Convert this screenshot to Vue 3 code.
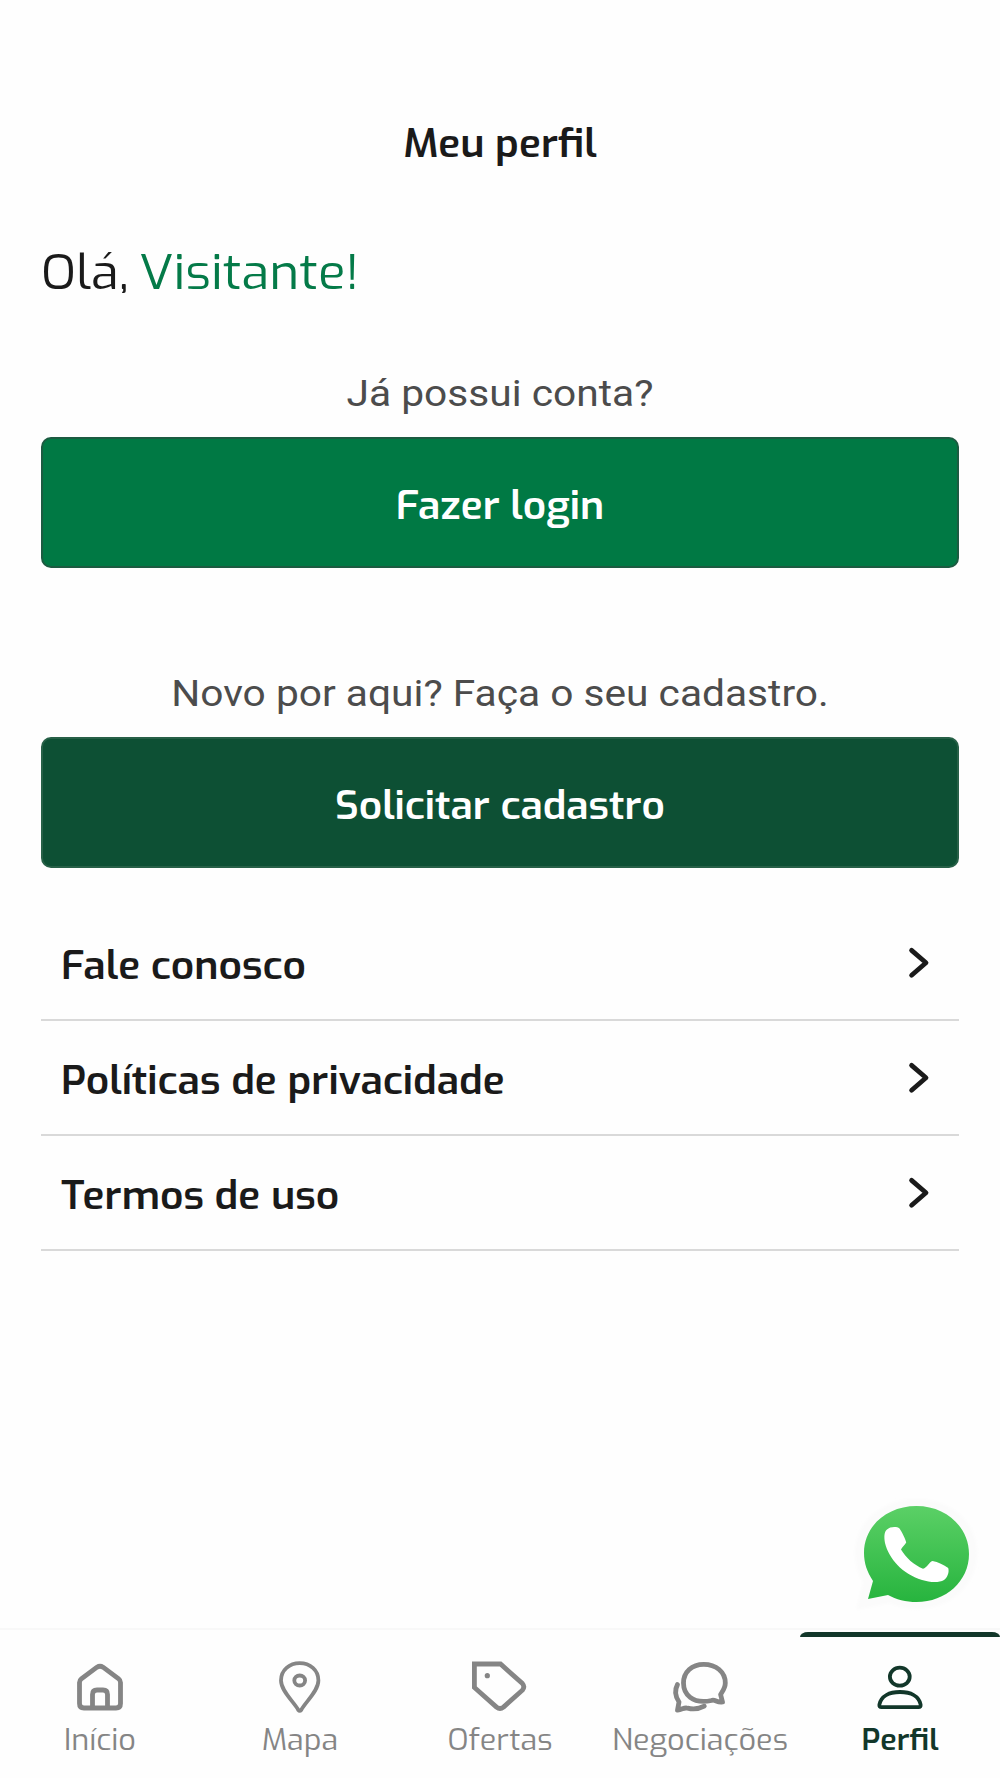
<script setup>
const links = ['Fale conosco', 'Políticas de privacidade', 'Termos de uso']
</script>

<template>
  <div class="screen">
    <header class="topbar"><h1 class="text">Meu perfil</h1></header>

    <main class="content">
      <h2 class="greeting text">Olá, <span>Visitante!</span></h2>

      <p class="hint hint-login">Já possui conta?</p>
      <button class="btn login"><span class="text">Fazer login</span></button>

      <p class="hint hint-register">Novo por aqui? Faça o seu cadastro.</p>
      <button class="btn register"><span class="text">Solicitar cadastro</span></button>

      <ul class="links">
        <li v-for="label in links" :key="label">
          <span class="text">{{ label }}</span>
          <svg class="chevron" width="24" height="34" viewBox="0 0 24 34">
            <path d="M4.6 4.4 19 16.8 4.6 29.2" />
          </svg>
        </li>
      </ul>
    </main>

    <svg class="whatsapp" width="144" height="130" viewBox="848 1490 144 130">
      <defs>
        <linearGradient id="wa" x1="0" y1="0" x2="0" y2="1">
          <stop offset="0" stop-color="#5bd066" />
          <stop offset="1" stop-color="#27b43e" />
        </linearGradient>
        <filter id="soft" x="-10%" y="-10%" width="120%" height="120%">
          <feGaussianBlur stdDeviation="1.500" />
        </filter>
      </defs>
      <path class="halo" filter="url(#soft)" d="M856 1609 863 1581C857 1571 855 1562 855 1552C855 1521 882 1498 916.500 1498C951 1498 977 1521 977 1552C977 1584 951 1608 916.500 1608C907 1608 898 1606 890 1602Z" />
      <path fill="url(#wa)" d="M868 1598 873 1580C867 1571 864 1562 864 1552C864 1525 887 1505 916.500 1505C946 1505 969 1526 969 1553C969 1580 946 1601 916.500 1601C906 1601 896 1598.500 888 1594Z" />
      <path fill="#fff" d="M887 1528.500C890 1525.500 897 1525.300 899.500 1527.500C902.500 1532 905.500 1538 906.200 1541.500C905 1544 902 1546 901 1548.500C906 1557 914 1564 923 1567.700C927 1567 929 1561 932.500 1560C938 1561 944 1564 948.200 1567C949.500 1571 947.500 1576.500 944 1579C939 1582 930 1581.500 922 1579C902 1572.500 889 1558 885 1542C884 1536 884 1531 887 1528.500Z" />
    </svg>

    <nav class="tabs">
      <a class="tab">
        <svg class="icon" width="64" height="60" viewBox="68 1655 64 60">
          <path class="w5" d="M79.500 1682.500Q79.500 1680.300 81.300 1678.900L97 1667.200Q100 1665.200 103 1667.200L118.700 1678.900Q120.500 1680.300 120.500 1682.500V1703.500Q120.500 1708 116 1708H84Q79.500 1708 79.500 1703.500ZM92.500 1707V1694.500Q92.500 1690 97 1690H103Q107.500 1690 107.500 1694.500V1707" />
        </svg>
        <span class="text">Início</span>
      </a>
      <a class="tab">
        <svg class="icon" width="64" height="60" viewBox="268 1655 64 60">
          <path class="w4" d="M298.300 1710C294 1702 281 1691 281 1680.500C281 1670 289.500 1663.200 299.700 1663.200C310 1663.200 318.400 1670 318.400 1680.500C318.400 1691 305.500 1702 301.200 1710Q299.700 1711.800 298.300 1710Z" />
          <ellipse class="w4" cx="299.700" cy="1680.500" rx="5.400" ry="5" />
        </svg>
        <span class="text">Mapa</span>
      </a>
      <a class="tab">
        <svg class="icon" width="64" height="60" viewBox="468 1655 64 60">
          <path class="w5 miter" d="M474.400 1664H500.500L522.400 1683.500Q525.200 1686.800 522.400 1690.200L503.500 1707.100Q500 1709.800 496.500 1707.100L474.400 1687.500Z" />
          <circle class="dot" cx="487.300" cy="1675.700" r="2.600" />
        </svg>
        <span class="text">Ofertas</span>
      </a>
      <a class="tab">
        <svg class="icon" width="64" height="60" viewBox="668 1655 64 60">
          <path class="w5" d="M703.700 1664.300C716 1664.300 725.300 1672 725.300 1683C725.300 1688 722.500 1691.500 720.600 1694.500L722.500 1702C717 1703 715 1699 711.500 1700.500C692 1704.500 683.500 1694 683.500 1683C683.500 1672 692 1664.300 703.700 1664.300Z" />
          <path class="w5" d="M677.500 1684.500C673.500 1692 676 1697.500 679 1702L677.500 1710.200C682.500 1709.500 684 1707.200 687.500 1708.200C693.500 1709.700 699 1709 704.300 1706.200" />
        </svg>
        <span class="text">Negociações</span>
      </a>
      <a class="tab active">
        <svg class="icon" width="64" height="60" viewBox="868 1655 64 60">
          <ellipse class="w4" cx="899.800" cy="1676.700" rx="9.900" ry="9" />
          <path class="w4" d="M881.500 1707.200Q879 1707.200 879.400 1704.500C881 1696 889.500 1692 900 1692C910.500 1692 919 1696 920.600 1704.500Q921 1707.200 918.500 1707.200Z" />
        </svg>
        <span class="text">Perfil</span>
      </a>
    </nav>
  </div>
</template>

<style>
body {
  margin: 0;
  background: #fefefe;
}
</style>

<style scoped>
.screen {
  position: relative;
  display: flex;
  flex-direction: column;
  width: 1000px;
  height: 1778px;
  overflow: hidden;
  background: #fefefe;
  color: #1a1a1a;
  font-family: Exo, "Exo 2", "Open Sans", sans-serif;
}

.text {
  display: block;
  transform: translateY(2.500px) scaleY(0.93);
}

.topbar {
  display: flex;
  justify-content: center;
  padding-top: 111px;
}

h1 {
  margin: 0;
  font-size: 40.800px;
  font-weight: 600;
  line-height: 60px;
}

.content {
  flex: 1;
  display: flex;
  flex-direction: column;
  padding: 70px 41px 0;
}

.greeting {
  margin: 0;
  font-size: 51px;
  font-weight: 400;
  line-height: 60px;
  word-spacing: -3.500px;
}

.greeting span {
  color: #047a48;
}

.hint {
  margin: 0;
  color: #4c4c4c;
  font-family: Roboto, sans-serif;
  font-size: 40.700px;
  line-height: 50px;
  text-align: center;
  transform: translateY(-0.500px) scaleY(0.93);
}

.hint-login {
  margin-top: 67px;
}

.hint-register {
  margin-top: 100px;
}

.btn {
  box-sizing: border-box;
  width: 918px;
  height: 131px;
  margin: 19px 0 0;
  padding: 1px 0 0;
  border-radius: 10px;
  color: #fff;
  font-family: inherit;
  font-size: 40.700px;
  font-weight: 600;
}

.login {
  border: 2px solid #1c5b41;
  background: #007944;
}

.register {
  border: 2px solid #276047;
  background: #0d5034;
}

.links {
  margin: 38px 0 0;
  padding: 0;
  list-style: none;
}

.links li {
  box-sizing: border-box;
  display: flex;
  align-items: center;
  justify-content: space-between;
  height: 115px;
  padding: 0 28px 0 20px;
  border-bottom: 2px solid #d9d9d9;
  font-size: 40.800px;
  font-weight: 600;
}

.chevron path {
  fill: none;
  stroke: #1a1a1a;
  stroke-width: 4.800;
  stroke-linecap: round;
  stroke-linejoin: round;
}

.whatsapp {
  position: absolute;
  right: 8px;
  bottom: 157.500px;
}

.halo {
  fill: #fbfbfb;
}

.tabs {
  display: flex;
  box-sizing: border-box;
  height: 150px;
  border-top: 2px solid #f8f8f8;
}

.tab {
  position: relative;
  flex: 1;
  display: flex;
  flex-direction: column;
  align-items: center;
  padding-top: 25px;
  color: #858585;
  font-size: 30.600px;
  font-weight: 400;
  line-height: 40px;
}

.icon {
  display: block;
  margin-bottom: 3px;
  fill: none;
  stroke: currentColor;
  stroke-linecap: round;
  stroke-linejoin: round;
}

.w5 {
  stroke-width: 4.800;
}

.w4 {
  stroke-width: 3.800;
}

.miter {
  stroke-linejoin: miter;
}

.dot {
  fill: currentColor;
  stroke: none;
}

.active {
  color: #12372a;
  font-weight: 600;
}

.active::before {
  content: "";
  position: absolute;
  top: 2px;
  left: 0;
  width: 100%;
  height: 5px;
  border-radius: 8px 8px 0 0 / 5px 5px 0 0;
  background: #12372a;
}
</style>
